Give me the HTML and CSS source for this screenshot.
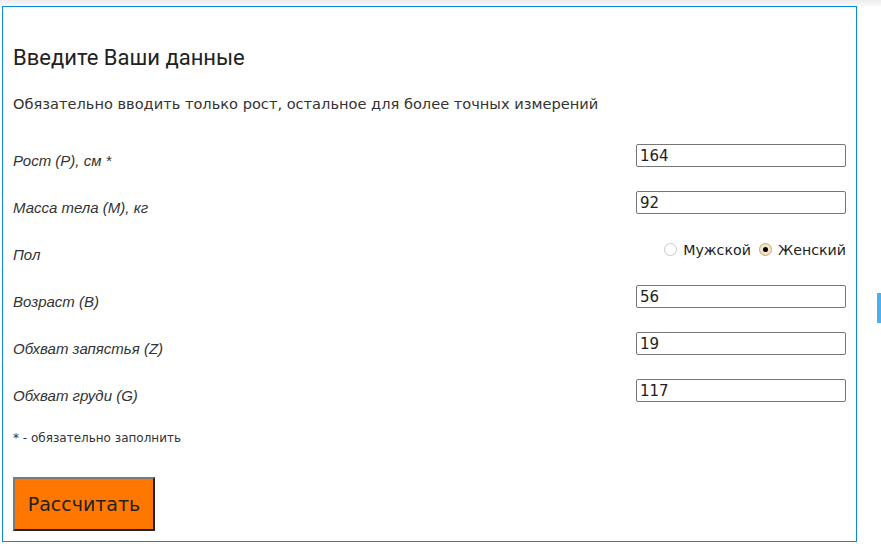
FILE: index.html
```html
<!DOCTYPE html>
<html lang="ru">
<head>
<meta charset="utf-8">
<title>Введите Ваши данные</title>
<link rel="stylesheet" href="styles.css">
</head>
<body>
<div class="topbar"></div>
<div class="page">
  <form class="box">
    <h2 class="title">Введите Ваши данные</h2>
    <p class="desc">Обязательно вводить только рост, остальное для более точных измерений</p>
    <div class="rows">
      <div class="row">
        <label class="lbl">Рост (Р), см *</label>
        <input class="field" type="text" value="164">
      </div>
      <div class="row">
        <label class="lbl">Масса тела (М), кг</label>
        <input class="field" type="text" value="92">
      </div>
      <div class="row">
        <label class="lbl">Пол</label>
        <div class="radios">
          <label class="ropt"><input class="radio" type="radio" name="sex"> Мужской</label>
          <label class="ropt"><input class="radio" type="radio" name="sex" checked> Женский</label>
        </div>
      </div>
      <div class="row">
        <label class="lbl">Возраст (В)</label>
        <input class="field" type="text" value="56">
      </div>
      <div class="row">
        <label class="lbl">Обхват запястья (Z)</label>
        <input class="field" type="text" value="19">
      </div>
      <div class="row">
        <label class="lbl">Обхват груди (G)</label>
        <input class="field" type="text" value="117">
      </div>
    </div>
    <p class="note">* - обязательно заполнить</p>
    <button class="btn" type="button">Рассчитать</button>
  </form>
</div>
<div class="scrollmark"></div>
</body>
</html>
```

FILE: styles.css
```css
html, body {
  margin: 0;
  padding: 0;
  background: #fff;
  width: 881px;
  height: 546px;
  overflow: hidden;
}
.topbar {
  height: 6px;
  background: linear-gradient(#ededed, #f8f8f8);
}
.page {
  padding-left: 2px;
}
.box {
  box-sizing: border-box;
  width: 855px;
  height: 536px;
  border: 1px solid #0a88dc;
  padding: 0 10px 0 10px;
  display: flex;
  flex-direction: column;
  align-items: flex-start;
}
.title {
  margin: 36px 0 0 0;
  font-family: Roboto, "Liberation Sans", sans-serif;
  font-weight: 400;
  font-size: 22px;
  line-height: 30px;
  color: #222;
}
.desc {
  margin: 22px 0 0 0;
  font-family: "DejaVu Sans", Verdana, sans-serif;
  font-size: 14.6px;
  line-height: 18px;
  color: #333;
}
.rows {
  align-self: stretch;
  margin-top: 31px;
  display: flex;
  flex-direction: column;
  gap: 24px;
}
.row {
  height: 23px;
  display: flex;
  justify-content: space-between;
  align-items: flex-end;
}
.lbl {
  font-family: "Liberation Sans", Arial, sans-serif;
  font-style: italic;
  font-size: 15px;
  line-height: 16px;
  color: #333;
  margin-bottom: -2px;
}
.field {
  box-sizing: border-box;
  width: 210px;
  height: 23px;
  margin: 0;
  border: 1px solid #767676;
  border-radius: 2px;
  padding: 0 3px;
  font-family: "DejaVu Sans", Verdana, sans-serif;
  font-size: 15px;
  color: #222;
  background: #fff;
}
.radios {
  height: 23px;
  display: flex;
  align-items: center;
  gap: 8px;
}
.ropt {
  display: flex;
  align-items: center;
  gap: 6px;
  font-family: "DejaVu Sans", Verdana, sans-serif;
  font-size: 14.2px;
  color: #222;
}
.radio {
  appearance: none;
  -webkit-appearance: none;
  box-sizing: border-box;
  width: 13px;
  height: 13px;
  margin: 0;
  border: 1px solid #c8c8c8;
  border-radius: 50%;
  background: #fff;
  position: relative;
}
.radio:checked {
  border-color: #b8a888;
  background: #f3e4c4;
}
.radio:checked::after {
  content: "";
  position: absolute;
  left: 3px;
  top: 3px;
  width: 5px;
  height: 5px;
  border-radius: 50%;
  background: #000;
}
.note {
  margin: 29px 0 0 0;
  font-family: "DejaVu Sans", Verdana, sans-serif;
  font-size: 12px;
  line-height: 14px;
  color: #333;
}
.btn {
  margin-top: 32px;
  box-sizing: border-box;
  width: 142px;
  height: 54px;
  background: #ff7700;
  border: 2px solid;
  border-color: #7a7a7a #222 #222 #7a7a7a;
  font-family: "DejaVu Sans", Verdana, sans-serif;
  font-size: 19px;
  color: #222;
  padding: 0;
}
.scrollmark {
  position: absolute;
  left: 877px;
  top: 293px;
  width: 4px;
  height: 30px;
  background: #4db0ee;
}
```
